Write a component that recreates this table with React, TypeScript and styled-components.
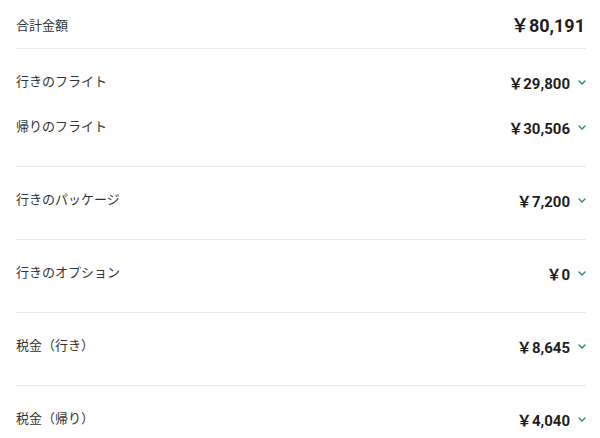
import styled, { createGlobalStyle } from "styled-components"

const GlobalStyle = createGlobalStyle`
    body {
        margin: 0;
        background: #ffffff;
        font-family: Roboto, "Noto Sans CJK JP", sans-serif;
        color: #222222;
    }
`

const Page = styled.div`
    width: 600px;
    padding: 0 14px 0 16px;
    box-sizing: border-box;
`

const TotalRow = styled.div`
    display: flex;
    justify-content: space-between;
    align-items: center;
    height: 48px;
    border-bottom: 1px solid #e8ecec;
`

const TotalLabel = styled.span`
    font-size: 13px;
    color: #333333;
`

const TotalValue = styled.span`
    font-size: 18px;
    font-weight: 700;
    color: #1f1f1f;
    margin-right: 1px;
`

const Section = styled.div<{ last?: boolean }>`
    display: flex;
    flex-direction: column;
    gap: 23px;
    padding: 22px 0 28px;
    border-bottom: ${({ last }) => (last ? "none" : "1px solid #e8e8e8")};
`

const Row = styled.div`
    display: flex;
    justify-content: space-between;
    align-items: center;
    height: 22px;
`

const Label = styled.span`
    font-size: 13px;
    color: #333333;
    margin-top: -3px;
`

const Amount = styled.div`
    display: flex;
    align-items: center;
    gap: 8px;
`

const Value = styled.span`
    font-size: 15px;
    font-weight: 700;
    color: #1f1f1f;
`

const Yen = styled.span`
    font-family: "Noto Sans CJK JP", sans-serif;
`

const Chevron = () => (
    <svg width="8" height="5" viewBox="0 0 8 5" fill="none">
        <path d="M1 1 L4 4 L7 1" stroke="#2a8a6c" strokeWidth="1.4" strokeLinecap="round" strokeLinejoin="round" />
    </svg>
)

type Item = { label: string; value: string }

const sections: Item[][] = [
    [
        { label: "行きのフライト", value: "29,800" },
        { label: "帰りのフライト", value: "30,506" },
    ],
    [{ label: "行きのパッケージ", value: "7,200" }],
    [{ label: "行きのオプション", value: "0" }],
    [{ label: "税金（行き）", value: "8,645" }],
    [{ label: "税金（帰り）", value: "4,040" }],
]

export default function App() {
    return (
        <>
            <GlobalStyle />
            <Page>
                <TotalRow>
                    <TotalLabel>合計金額</TotalLabel>
                    <TotalValue>
                        <Yen>￥</Yen>80,191
                    </TotalValue>
                </TotalRow>
                {sections.map((items, i) => (
                    <Section key={`section-${i}`} last={i === sections.length - 1}>
                        {items.map((item) => (
                            <Row key={item.label}>
                                <Label>{item.label}</Label>
                                <Amount>
                                    <Value>
                                        <Yen>￥</Yen>
                                        {item.value}
                                    </Value>
                                    <Chevron />
                                </Amount>
                            </Row>
                        ))}
                    </Section>
                ))}
            </Page>
        </>
    )
}
